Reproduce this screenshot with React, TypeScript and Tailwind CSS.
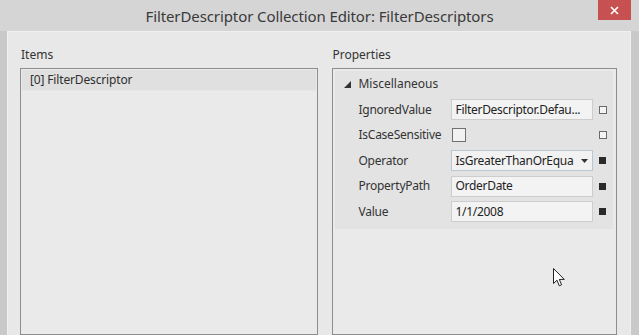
import React from "react";

const font = { fontFamily: '"Segoe UI", "Noto Sans", "Open Sans", sans-serif' };

function Marker({ filled }: { filled: boolean }) {
  return (
    <div
      className={
        filled
          ? "w-[7px] h-[7px] bg-[#2a2a2a]"
          : "w-[8px] h-[8px] border border-[#6a6a6a] bg-[#f4f4f4]"
      }
    />
  );
}

function Row({
  label,
  children,
  filled,
  h,
}: {
  label: string;
  children: React.ReactNode;
  filled: boolean;
  h: string;
}) {
  return (
    <div className={`flex items-center ${h}`}>
      <div className="w-[116px] pl-[23px] text-[12px] tracking-[-0.25px] text-[#333]">{label}</div>
      <div className="w-[142px] flex items-center">{children}</div>
      <div className="w-[19px] flex justify-center">
        <Marker filled={filled} />
      </div>
    </div>
  );
}

function Box({ text, arrow, focus }: { text: string; arrow?: boolean; focus?: boolean }) {
  return (
    <div
      className={`w-[142px] h-[21px] flex items-center pl-[3px] pr-[2px] text-[12px] tracking-[-0.3px] text-[#222] border ${
        focus ? "border-[#b9c6d3] bg-[#f2f2f2]" : "border-[#cdcdcd] bg-[#f3f3f3]"
      }`}
    >
      <span className="flex-1 whitespace-nowrap overflow-hidden">{text}</span>
      {arrow && (
        <svg width="7" height="4" viewBox="0 0 7 4" className="ml-[1px] mr-[2px] shrink-0">
          <path d="M0 0 L7 0 L3.5 4 Z" fill="#333" />
        </svg>
      )}
    </div>
  );
}

export default function App() {
  return (
    <div
      className="w-[639px] h-[335px] bg-[#c9c9c9] flex flex-col overflow-hidden relative"
      style={font}
    >
      {/* title bar */}
      <div className="h-[31px] bg-[#d5d5d5] flex items-center justify-center">
        <span className="text-[15px] text-[#3a3a3a] tracking-[-0.1px] mt-[2px]">
          FilterDescriptor Collection Editor: FilterDescriptors
        </span>
      </div>
      <div className="absolute left-[598px] top-0 w-[33px] h-[20px] bg-[#c75051] flex items-center justify-center">
        <svg width="9" height="9" viewBox="0 0 9 9">
          <path d="M1 1 L8 8 M8 1 L1 8" stroke="#fff" strokeWidth="1.6" />
        </svg>
      </div>

      {/* body */}
      <div className="flex-1 ml-[7px] mr-[8px] bg-[#e8e8e8] border-t border-l border-r border-[#f0f0f0] flex gap-[14px] pl-[12px] pr-[13px] pt-[15px]">
        {/* items */}
        <div className="w-[299px] flex flex-col">
          <div className="h-[16px] text-[12px] text-[#333] leading-[16px] pl-[1px]">Items</div>
          <div className="mt-[5px] flex-1 border border-[#8d8d8d] bg-[#eaeaea] p-[1px]">
            <div className="h-[21px] bg-[#e0e0e0] border-b border-[#e6e6e6] flex items-center pl-[8px] text-[12px] tracking-[-0.15px] text-[#2e2e2e]">
              [0] FilterDescriptor
            </div>
          </div>
        </div>
        {/* properties */}
        <div className="w-[285px] flex flex-col">
          <div className="h-[16px] text-[12px] text-[#333] leading-[16px]">Properties</div>
          <div className="mt-[5px] flex-1 border border-[#8d8d8d] bg-[#eaeaea] pt-[2px] pl-[2px] pr-[3px] relative">
            <div className="bg-[#e3e3e3] h-[158px] flex flex-col">
              <div className="h-[26px] flex items-center pl-[9px] text-[12px] text-[#333]">
                <svg width="7" height="7" viewBox="0 0 7 7" className="mr-[7px]">
                  <path d="M7 0 L7 7 L0 7 Z" fill="#333" />
                </svg>
                Miscellaneous
              </div>
              <Row label="IgnoredValue" filled={false} h="h-[25px]">
                <Box text="FilterDescriptor.Defau..." />
              </Row>
              <Row label="IsCaseSensitive" filled={false} h="h-[26px]">
                <div className="w-[14px] h-[14px] border border-[#707070] bg-[#f2f2f2] ml-[1px]" />
              </Row>
              <Row label="Operator" filled={true} h="h-[25px]">
                <Box text="IsGreaterThanOrEqua" arrow focus />
              </Row>
              <Row label="PropertyPath" filled={true} h="h-[26px]">
                <Box text="OrderDate" />
              </Row>
              <Row label="Value" filled={true} h="h-[25px]">
                <Box text="1/1/2008" />
              </Row>
            </div>
            {/* mouse cursor */}
            <svg
              width="13"
              height="21"
              viewBox="0 0 13 21"
              className="absolute left-[220px] top-[199px]"
            >
              <path
                d="M0.5 0.5 L0.5 15.5 L4 12.2 L6.3 17.8 L8.6 16.8 L6.3 11.4 L11.3 11.4 Z"
                fill="#fff"
                stroke="#222"
                strokeWidth="1"
                strokeLinejoin="round"
              />
            </svg>
          </div>
        </div>
      </div>
    </div>
  );
}
